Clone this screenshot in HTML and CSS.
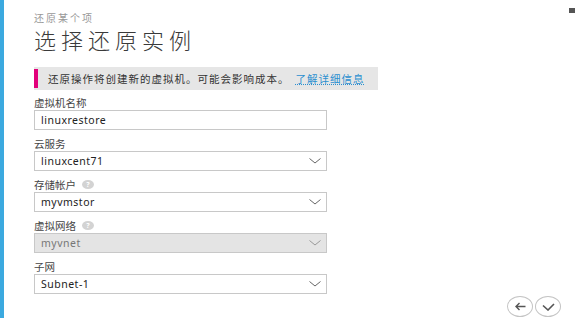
FILE: index.html
```html
<!DOCTYPE html>
<html>
    <head>
        <meta charset="utf-8">
        <title>选择还原实例</title>
        <link rel="stylesheet" href="styles.css">
    </head>
    <body>
        <div class="edge"></div>
        <div class="wizard">
            <p class="subTitle">还原某个项</p>
            <h1 class="title">选择还原实例</h1>

            <div class="notice">
                <span class="noticeBar"></span>
                <p class="noticeTxt">还原操作将创建新的虚拟机。可能会影响成本。<a class="link" href="#">了解详细信息</a></p>
            </div>

            <div class="fields">
                <div class="field">
                    <label class="label">虚拟机名称</label>
                    <div class="box">linuxrestore</div>
                </div>

                <div class="field">
                    <label class="label">云服务</label>
                    <div class="box">linuxcent71
                        <svg class="chev" width="12" height="6" viewBox="0 0 12 6"><path d="M0.5 0.5 6 5l5.5-4.5" fill="none" stroke="#666" stroke-width="1"/></svg>
                    </div>
                </div>

                <div class="field">
                    <label class="label">存储帐户 <span class="help">?</span></label>
                    <div class="box">myvmstor
                        <svg class="chev" width="12" height="6" viewBox="0 0 12 6"><path d="M0.5 0.5 6 5l5.5-4.5" fill="none" stroke="#666" stroke-width="1"/></svg>
                    </div>
                </div>

                <div class="field">
                    <label class="label">虚拟网络 <span class="help">?</span></label>
                    <div class="box disabled">myvnet
                        <svg class="chev" width="12" height="6" viewBox="0 0 12 6"><path d="M0.5 0.5 6 5l5.5-4.5" fill="none" stroke="#999" stroke-width="1"/></svg>
                    </div>
                </div>

                <div class="field">
                    <label class="label">子网</label>
                    <div class="box">Subnet-1
                        <svg class="chev" width="12" height="6" viewBox="0 0 12 6"><path d="M0.5 0.5 6 5l5.5-4.5" fill="none" stroke="#666" stroke-width="1"/></svg>
                    </div>
                </div>
            </div>

            <div class="nav">
                <button class="round">
                    <svg width="12" height="9" viewBox="0 0 12 9"><path d="M11.5 4.5H2M5.5 1 2 4.5 5.5 8" fill="none" stroke="#555" stroke-width="1.4"/></svg>
                </button>
                <button class="round">
                    <svg width="13" height="8" viewBox="0 0 13 8"><path d="M1 2.5l5 4.5 6-6" fill="none" stroke="#555" stroke-width="1.6"/></svg>
                </button>
            </div>
        </div>
        <span class="corner"></span>
    </body>
</html>
```

FILE: styles.css
```css
* {
    margin: 0;
    padding: 0;
    box-sizing: border-box;
}

body {
    width: 576px;
    height: 318px;
    display: flex;
    background-color: white;
    font-family: "Noto Sans", "Noto Sans CJK SC", sans-serif;
    color: #333;
    overflow: hidden;
    position: relative;
}

.edge {
    width: 4px;
    background-color: #3ba9df;
}

.wizard {
    flex: 1;
    height: 318px;
    padding: 11px 0 0 30px;
    display: flex;
    flex-flow: column nowrap;
}

.subTitle {
    font-size: 10px;
    line-height: 14px;
    color: #999;
    letter-spacing: 2px;
}

.title {
    margin-top: 2px;
    font-size: 22px;
    font-weight: 300;
    line-height: 26px;
    color: #3a3a3a;
    letter-spacing: 5px;
}

.notice {
    margin-top: 14px;
    width: 344px;
    height: 23px;
    background-color: #e6e6e6;
    display: flex;
    align-items: center;
}
.noticeBar {
    width: 4px;
    height: 19px;
    background-color: #e2007a;
}
.noticeTxt {
    margin-left: 10px;
    font-size: 10.5px;
    color: #333;
    letter-spacing: 1px;
    white-space: nowrap;
}
.link {
    margin-left: 6px;
    color: #2a8fd0;
    text-decoration: underline dotted;
}

.fields {
    margin-top: 5px;
    width: 293px;
    display: flex;
    flex-flow: column nowrap;
    gap: 6px;
}

.label {
    display: flex;
    align-items: center;
    gap: 6px;
    height: 15px;
    font-size: 10.5px;
    color: #444;
}

.help {
    display: inline-flex;
    justify-content: center;
    align-items: center;
    width: 12px;
    height: 9px;
    border-radius: 50%;
    background-color: #d3d3d3;
    color: white;
    font-size: 7px;
    font-weight: bold;
}

.box {
    height: 20px;
    border: 1px solid #c8c8c8;
    background-color: white;
    padding: 0 5px 0 6px;
    display: flex;
    align-items: center;
    justify-content: space-between;
    font-size: 10.5px;
    color: #222;
    letter-spacing: 0.5px;
}
.disabled {
    background-color: #e4e4e4;
    color: #777;
}

.nav {
    margin-top: auto;
    align-self: flex-end;
    display: flex;
    gap: 2px;
    padding: 0 15px 1px 0;
}
.round {
    width: 26px;
    height: 21px;
    border-radius: 50%;
    border: 1.5px solid #c4c4c4;
    background-color: white;
    display: flex;
    justify-content: center;
    align-items: center;
}

.corner {
    position: absolute;
    right: 1px;
    top: 8px;
    width: 6px;
    height: 5px;
    background-color: #555;
}
```
